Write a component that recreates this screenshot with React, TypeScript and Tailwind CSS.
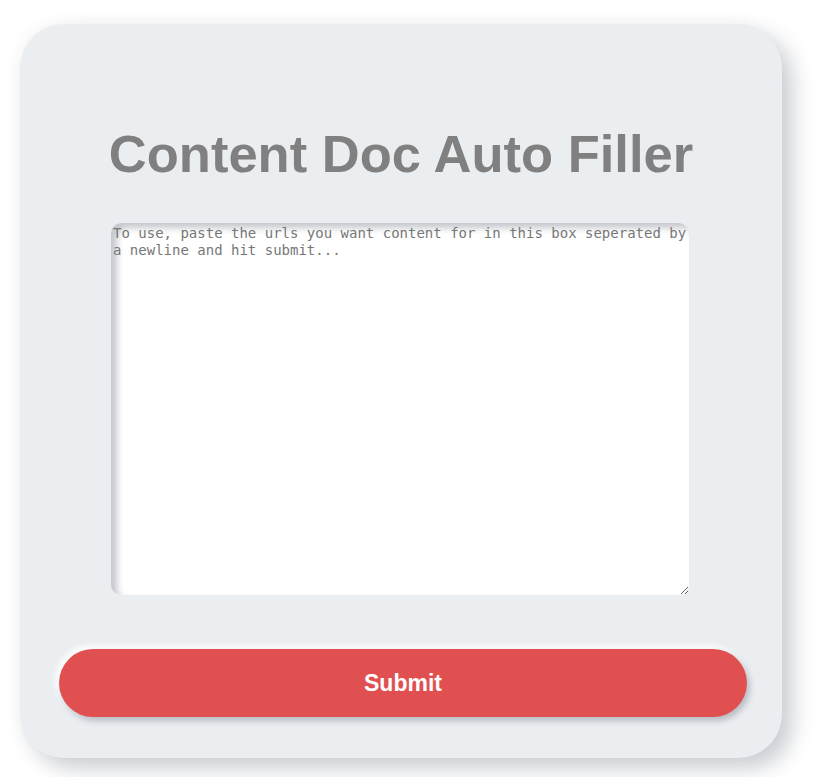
import React from "react";

const App: React.FC = () => {
  return (
    <div className="min-h-[777px] bg-white pt-[24px] pl-[20px] font-['Liberation_Sans',Arial,sans-serif]">
      {/* card */}
      <div className="w-[762px] h-[734px] rounded-[44px] bg-[#ebeef1] shadow-[10px_10px_22px_#c9ccd1,-6px_-6px_14px_rgba(0,0,0,0.015)] flex flex-col items-center pt-[98px]">
        <h1 className="text-[52.5px] font-bold leading-[64px] text-[#808080]">
          Content Doc Auto Filler
        </h1>

        <textarea
          placeholder="To use, paste the urls you want content for in this box seperated by a newline and hit submit..."
          className="mt-[37px] mr-[2px] w-[578px] h-[372px] rounded-[10px] bg-white p-[2px] font-['DejaVu_Sans_Mono',monospace] text-[14px] leading-[17px] text-[#555] placeholder:text-[#777] outline-none shadow-[inset_6px_5px_7px_#c4c7cc]"
        />

        <button className="mt-[54px] ml-[4px] w-[688px] h-[68px] rounded-full bg-[#e05050] text-white text-[23px] font-bold shadow-[3px_4px_6px_#b9bcc2,-3px_-3px_6px_#ffffff]">
          Submit
        </button>
      </div>
    </div>
  );
};

export default App;
